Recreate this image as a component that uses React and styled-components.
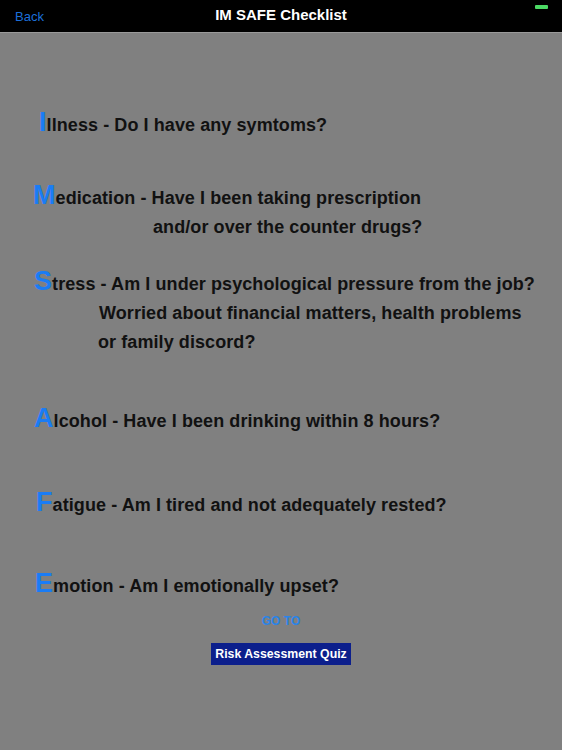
import React from 'react'
import styled, { createGlobalStyle } from 'styled-components'

const GlobalStyle = createGlobalStyle`
  html, body {
    margin: 0;
    padding: 0;
    background: #808080;
  }
  body {
    font-family: "Liberation Sans", Arial, sans-serif;
  }
`

const Page = styled.div`
  width: 562px;
  min-height: 750px;
  background: #808080;
  display: flex;
  flex-direction: column;
`

const NavBar = styled.div`
  height: 32px;
  background: #000;
  border-bottom: 1px solid #9a9a9a;
  position: relative;
  display: flex;
  align-items: center;
  justify-content: center;
`

const BackLink = styled.span`
  position: absolute;
  left: 15px;
  top: 9px;
  font-size: 13px;
  color: #1c6fd9;
`

const Title = styled.h1`
  margin: 0;
  margin-top: -4px;
  font-size: 15px;
  font-weight: bold;
  color: #fff;
`

const Battery = styled.div`
  position: absolute;
  right: 14px;
  top: 5px;
  width: 13px;
  height: 4px;
  border-radius: 1px;
  background: #4cd964;
`

const Content = styled.div`
  display: flex;
  flex-direction: column;
`

const Item = styled.div`
  margin-top: ${(p) => p.$top}px;
`

const Row = styled.div`
  height: 29px;
  line-height: 29px;
  padding-left: ${(p) => p.$indent}px;
  font-size: 18px;
  letter-spacing: 0.08px;
  font-weight: bold;
  color: #111;
  white-space: nowrap;
`

const Initial = styled.span`
  font-size: 27px;
  line-height: 0;
  color: #1a7cf5;
`

const GoTo = styled.div`
  margin-top: 12px;
  text-align: center;
  font-size: 12px;
  line-height: 16px;
  font-weight: bold;
  color: #2a84e8;
`

const QuizButton = styled.button`
  align-self: center;
  margin-top: 14px;
  height: 22px;
  padding: 0 4px;
  border: none;
  background: #0c1f8c;
  color: #fff;
  font-family: "Liberation Sans", Arial, sans-serif;
  font-size: 12.3px;
  font-weight: bold;
`

const items = [
  { letter: 'I', top: 78, indent: 39, lines: ['llness - Do I have any symtoms?'] },
  {
    letter: 'M', top: 44, indent: 33,
    lines: ['edication - Have I been taking prescription', 'and/or over the counter drugs?'],
    indents: [153],
  },
  {
    letter: 'S', top: 28, indent: 34,
    lines: [
      'tress - Am I under psychological pressure from the job?',
      'Worried about financial matters, health problems',
      'or family discord?',
    ],
    indents: [99, 98],
  },
  { letter: 'A', top: 50, indent: 34, lines: ['lcohol - Have I been drinking within 8 hours?'] },
  { letter: 'F', top: 55, indent: 36, lines: ['atigue - Am I tired and not adequately rested?'] },
  { letter: 'E', top: 52, indent: 35, lines: ['motion - Am I emotionally upset?'] },
]

const App = () => {
  return (
    <Page>
      <GlobalStyle />
      <NavBar>
        <BackLink>Back</BackLink>
        <Title>IM SAFE Checklist</Title>
        <Battery />
      </NavBar>
      <Content>
        {items.map((it) => (
          <Item key={it.letter} $top={it.top}>
            <Row $indent={it.indent}>
              <Initial>{it.letter}</Initial>
              {it.lines[0]}
            </Row>
            {it.lines.slice(1).map((line, i) => (
              <Row key={line} $indent={it.indents[i]}>
                {line}
              </Row>
            ))}
          </Item>
        ))}
        <GoTo>GO TO</GoTo>
        <QuizButton>Risk Assessment Quiz</QuizButton>
      </Content>
    </Page>
  )
}

export default App
